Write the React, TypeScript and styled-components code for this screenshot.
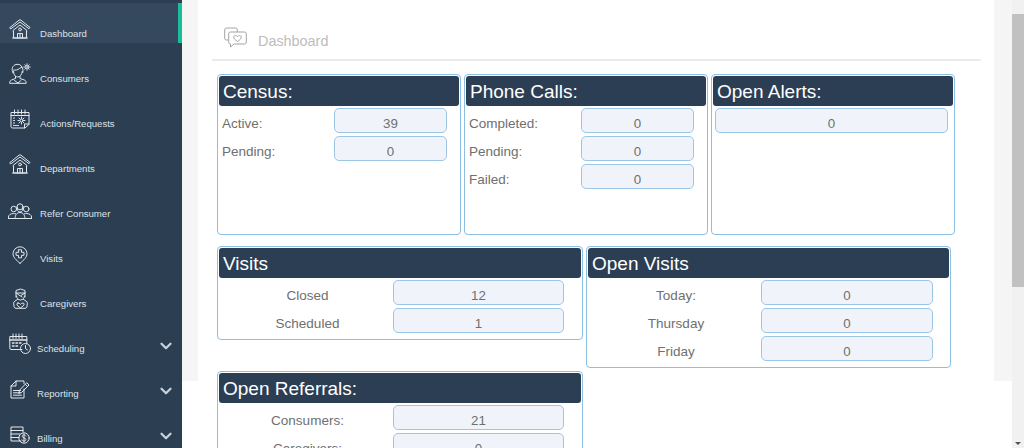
import React from "react";
import styled, { createGlobalStyle } from "styled-components";
import { ChevronDown } from "lucide-react";

const GlobalStyle = createGlobalStyle`
    html, body {
        margin: 0;
        padding: 0;
        height: 100%;
        overflow: hidden;
        font-family: "Liberation Sans", Arial, sans-serif;
    }
`;

// ---- sidebar icons ----
const Svg = styled.svg`
    display: block;
    flex-shrink: 0;
    fill: none;
    stroke: #e3e8ed;
    stroke-width: 1;
    stroke-linejoin: round;
    stroke-linecap: round;
`;

const HomeIcon = () => (
    <Svg width="22" height="20" viewBox="0 0 22 20">
        <path d="M1 8.500 10 1.200a1.600 1.600 0 0 1 2 0L21 8.500l-1 1.200L11 3 2 9.700z" />
        <path d="M4 11.500 11 6l7 5.500" />
        <path d="M4.500 12v7h13v-7M3.500 19h15" />
        <path d="M8.500 19v-4.500h5V19M11 14.500V19" />
        <circle cx="11" cy="10.500" r="1.400" />
    </Svg>
);

const ConsumerIcon = () => (
    <Svg width="22" height="21" viewBox="0 0 22 21">
        <path d="M4 10C2 6 3.500 2.500 7 1.500c2.500-.7 5 .3 6 2.500l-2.500 1.500C8.500 7 6.500 7.500 5 7" />
        <path d="M4.500 8c0 3.500 1.800 6 4.200 6s4-2.200 4.500-5.500" />
        <path d="M13 4c1 1.500 1.200 3.200.8 5.500" />
        <path d="M6.500 13.500v2l-4 1.500C1.300 17.500.7 18.500.7 20.300h16.500c0-1.800-.6-2.800-1.800-3.300l-4.400-1.500v-2" />
        <path d="M5.500 17.500 9 20M12 17.500 9 20" />
        <circle cx="18" cy="4" r="1.300" />
        <path d="M18 .8v1.200M18 6v1.200M14.800 4H16M20 4h1.200M15.800 1.800l.8.800M19.400 5.400l.8.800M20.200 1.800l-.8.800M16.600 5.400l-.8.800" />
    </Svg>
);

const CalendarGearIcon = () => (
    <Svg width="20" height="20" viewBox="0 0 20 20">
        <path d="M14.500 19H2.500A1.500 1.500 0 0 1 1 17.500V3.500h18v11.500z" />
        <path d="M1 6.500h18M14.500 19v-4H19" />
        <path d="M4.500 1v4M8 1v4M11.500 1v4M15 1v4" />
        <circle cx="11.500" cy="11.500" r="1.500" />
        <path d="M11.500 8v1.500M11.500 13.500V15M8 11.500h1.500M13.500 11.500H15M9 9l1 1M13 13l1 1M14 9l-1 1M10 13l-1 1" />
        <path d="M3.500 9h2M3.500 11.500h2M3.500 14h2M3.500 16.500h5" strokeDasharray="1 1" />
    </Svg>
);

const GroupIcon = () => (
    <Svg width="24" height="16" viewBox="0 0 24 16">
        <circle cx="12" cy="3.800" r="3" />
        <path d="M9 4c-.5 3 1 5 3 5s3.500-2 3-5" />
        <path d="M7 15.500c0-3.500 2-6 5-6s5 2.500 5 6z" />
        <circle cx="5.800" cy="6" r="2.800" />
        <path d="M.5 15.500v-1.500c0-2 2-3.500 5.300-3.500.6 0 1.200.1 1.700.2" />
        <circle cx="18.200" cy="6" r="2.800" />
        <path d="M23.500 15.500v-1.500c0-2-2-3.500-5.300-3.500-.6 0-1.200.1-1.700.2" />
        <path d="M.5 15.500h23" />
    </Svg>
);

const PinIcon = () => (
    <Svg width="16" height="18" viewBox="0 0 16 18">
        <path d="M8 17.300C4 14 1 11 1 7.800a7 7 0 0 1 14 0C15 11 12 14 8 17.300z" />
        <path d="M6.500 3.800h3v2.500H12v3H9.500v2.500h-3V9.300H4v-3h2.500z" />
    </Svg>
);

const CaregiverIcon = () => (
    <Svg width="15" height="21" viewBox="0 0 15 21">
        <path d="M3 9V2.500L7.500 1 12 2.500V9" />
        <path d="M3 5h9M3 5l6 4M12 5 8 7.500" />
        <path d="M3.500 8c0 2 1.800 4 4 4s4-2 4-4" />
        <path d="M4.500 11.500 2 13C.5 14 .3 15.500 1 17c-.5 1.800.5 3.300 2 3.300h9c1.500 0 2.500-1.500 2-3.300.7-1.500.5-3-1-4l-2.500-1.500" />
        <path d="M5 15c1 0 1.800.5 2.500 1.300.7-.8 1.500-1.300 2.500-1.300 1.500 0 1.500 2 0 3l-2.500 2-2.500-2c-1.500-1-1.500-3 0-3z" />
    </Svg>
);

const CalendarClockIcon = () => (
    <Svg width="22" height="21" viewBox="0 0 22 21">
        <path d="M13 16.500H2A1.500 1.500 0 0 1 .8 15V3.500h17V11" />
        <path d="M.8 7h17" strokeWidth="1.600" />
        <path d="M4 1v4.500M7 1v4.500M10 1v4.500M13 1v4.500" />
        <path d="M3.500 10h1.500M7 10h1.500M10.500 10h1.500M3.500 13h1.500M7 13h1.500" strokeWidth="1.500" />
        <circle cx="16.500" cy="15.500" r="5" />
        <path d="M16.500 12.500v3.200l2 1.200" />
    </Svg>
);

const ReportIcon = () => (
    <Svg width="20" height="19" viewBox="0 0 20 19">
        <path d="M14 9v9H1V6l5-5h8v2.500" />
        <path d="M6 1v5H1" />
        <path d="M3.500 10.500h7M3.500 12.800h7M3.500 15.200h8" />
        <path d="M9.500 10.500l-.8 2.800 2.800-.8L19 5l-2-2z" />
        <path d="M15.500 4.500l2 2" />
    </Svg>
);

const BillingIcon = () => (
    <Svg width="20" height="18" viewBox="0 0 20 18">
        <path d="M11 15H1V1h12v5" />
        <path d="M1 4.500h12M1 8h9M1 11.500h8" />
        <circle cx="14" cy="12" r="5.200" />
        <path d="M15.800 10c-.4-.8-1-1.200-1.800-1.200-1 0-1.800.6-1.800 1.500 0 2 3.700 1.200 3.700 3.300 0 .9-.8 1.500-1.900 1.500-.9 0-1.600-.5-2-1.300M14 7.800v8.400" />
    </Svg>
);

const ChatHeartIcon = () => (
    <svg width="23" height="21" viewBox="0 0 23 21" fill="none" stroke="#a3a3a3" strokeWidth="1" strokeLinejoin="round">
        <path d="M4 13H2.500A1.800 1.800 0 0 1 .7 11.200V2.800A1.800 1.800 0 0 1 2.500 1h9A1.800 1.800 0 0 1 13.300 2.800V5" />
        <path d="M6.500 5h14a1.800 1.800 0 0 1 1.800 1.800v8.400a1.800 1.800 0 0 1-1.800 1.800H10l-3.500 3v-3a1.800 1.800 0 0 1-1.800-1.800V6.800A1.800 1.800 0 0 1 6.500 5z" />
        <path d="M13.500 14.500c-2.500-1.700-3.800-3-3.800-4.300 0-1 .8-1.700 1.800-1.700.8 0 1.500.4 2 1.200.5-.8 1.200-1.200 2-1.200 1 0 1.800.7 1.800 1.700 0 1.300-1.300 2.600-3.800 4.300z" />
    </svg>
);

// ---- data ----
const menu = [
    { label: "Dashboard", icon: <HomeIcon />, active: true },
    { label: "Consumers", icon: <ConsumerIcon /> },
    { label: "Actions/Requests", icon: <CalendarGearIcon /> },
    { label: "Departments", icon: <HomeIcon /> },
    { label: "Refer Consumer", icon: <GroupIcon /> },
    { label: "Visits", icon: <PinIcon /> },
    { label: "Caregivers", icon: <CaregiverIcon /> },
    { label: "Scheduling", icon: <CalendarClockIcon />, sub: true },
    { label: "Reporting", icon: <ReportIcon />, sub: true },
    { label: "Billing", icon: <BillingIcon />, sub: true },
];

interface IStat {
    label?: string;
    value: number;
}

interface ICard {
    title: string;
    width: number;
    height?: number;
    centered?: boolean;
    labelWidth: number;
    valueWidth: number;
    stats: IStat[];
}

const topCards: ICard[] = [
    { title: "Census:", width: 244, height: 161, labelWidth: 112, valueWidth: 113, stats: [{ label: "Active:", value: 39 }, { label: "Pending:", value: 0 }] },
    { title: "Phone Calls:", width: 244, height: 161, labelWidth: 112, valueWidth: 113, stats: [{ label: "Completed:", value: 0 }, { label: "Pending:", value: 0 }, { label: "Failed:", value: 0 }] },
    { title: "Open Alerts:", width: 244, height: 161, labelWidth: 0, valueWidth: 233, stats: [{ value: 0 }] },
];

const middleCards: ICard[] = [
    { title: "Visits", width: 366, centered: true, labelWidth: 171, valueWidth: 171, stats: [{ label: "Closed", value: 12 }, { label: "Scheduled", value: 1 }] },
    { title: "Open Visits", width: 365, centered: true, labelWidth: 170, valueWidth: 172, stats: [{ label: "Today:", value: 0 }, { label: "Thursday", value: 0 }, { label: "Friday", value: 0 }] },
];

const bottomCards: ICard[] = [
    { title: "Open Referrals:", width: 366, centered: true, labelWidth: 171, valueWidth: 171, stats: [{ label: "Consumers:", value: 21 }, { label: "Caregivers:", value: 0 }] },
];

const StatCard = ({ title, width, height, centered, labelWidth, valueWidth, stats }: ICard) => (
    <Card $width={width} $height={height}>
        <CardTitle>{title}</CardTitle>
        <StatList $inset={labelWidth === 0 ? 2 : 3}>
            {stats.map((stat, index) => (
                <StatRow key={index} $label={labelWidth} $value={valueWidth}>
                    <StatLabel $centered={centered}>{stat.label}</StatLabel>
                    <StatValue>{stat.value}</StatValue>
                </StatRow>
            ))}
        </StatList>
    </Card>
);

const App = () => {
    return (
        <Page>
            <GlobalStyle />
            <Sidebar>
                {menu.map((item) => (
                    <MenuItem key={item.label} $active={item.active}>
                        <MenuIcon $sub={item.sub}>{item.icon}</MenuIcon>
                        <MenuLabel>{item.label}</MenuLabel>
                        {item.sub && (
                            <MenuArrow>
                                <ChevronDown size={18} strokeWidth={3} />
                            </MenuArrow>
                        )}
                    </MenuItem>
                ))}
            </Sidebar>
            <Main>
                <Panel>
                    <PanelHeader>
                        <PanelIcon><ChatHeartIcon /></PanelIcon>
                        <PanelTitle>Dashboard</PanelTitle>
                    </PanelHeader>
                    <Board>
                        <CardRow>
                            {topCards.map((card) => <StatCard key={card.title} {...card} />)}
                        </CardRow>
                        <CardRow>
                            {middleCards.map((card) => <StatCard key={card.title} {...card} />)}
                        </CardRow>
                        <CardRow>
                            {bottomCards.map((card) => <StatCard key={card.title} {...card} />)}
                        </CardRow>
                    </Board>
                </Panel>
            </Main>
            <ScrollTrack>
                <ScrollThumb />
                <ScrollArrow />
            </ScrollTrack>
        </Page>
    );
};

export default App;

const Page = styled.div`
    display: flex;
    width: 1024px;
    height: 448px;
    overflow: hidden;
    background: #fff;
`;

const Sidebar = styled.nav`
    flex: 0 0 182px;
    padding-top: 3px;
    box-sizing: border-box;
    background: #2c3e52;
    display: flex;
    flex-direction: column;
    gap: 5px;
    overflow: hidden;
`;

const MenuItem = styled.div<{ $active?: boolean }>`
    flex: 0 0 40px;
    display: flex;
    align-items: flex-end;
    box-sizing: border-box;
    padding: 0 7px 3px 9px;
    background: ${(p) => (p.$active ? "#35495e" : "transparent")};
    box-shadow: ${(p) => (p.$active ? "inset -4px 0 0 #1abc9c" : "none")};
`;

const MenuIcon = styled.span<{ $sub?: boolean }>`
    flex: 0 0 ${(p) => (p.$sub ? 28 : 31)}px;
    min-width: 0;
    box-sizing: border-box;
    display: flex;
    justify-content: center;
    padding-right: ${(p) => (p.$sub ? 6 : 9)}px;
    margin-bottom: 1px;
`;

const MenuLabel = styled.span`
    font-size: 9.6px;
    line-height: 12px;
    color: #dde3e9;
`;

const MenuArrow = styled.span`
    display: flex;
    margin-left: auto;
    color: #c8d2dc;
`;

const Main = styled.main`
    flex: 1;
    min-width: 0;
    padding: 0 18px 0 16px;
    background: linear-gradient(#f5f5f5 381px, #fff 381px);
`;

const Panel = styled.section`
    height: 100%;
    box-sizing: border-box;
    padding: 0 13px 0 14px;
    background: #fff;
    overflow: hidden;
`;

const PanelHeader = styled.header`
    height: 61px;
    box-sizing: border-box;
    display: flex;
    align-items: flex-end;
    gap: 11px;
    padding: 0 0 9px 12px;
    border-bottom: 2px solid #e9ecef;
`;

const PanelIcon = styled.span`
    display: flex;
    margin-bottom: 2px;
`;

const PanelTitle = styled.span`
    font-size: 14.4px;
    line-height: 17px;
    color: #bdbdbd;
`;

const Board = styled.div`
    display: flex;
    flex-direction: column;
    gap: 3px;
    margin: 13px 0 0 5px;

    > :first-child {
        margin-bottom: 8px;
    }
`;

const CardRow = styled.div`
    display: flex;
    align-items: flex-start;
    gap: 3px;
`;

const Card = styled.article<{ $width: number; $height?: number }>`
    width: ${(p) => p.$width}px;
    height: ${(p) => (p.$height ? `${p.$height}px` : "auto")};
    box-sizing: border-box;
    flex-shrink: 0;
    padding: 1px 1px 6px;
    border: 1px solid #8dbfe2;
    border-radius: 4px;
    background: #fff;
`;

const CardTitle = styled.h2`
    margin: 0;
    height: 30px;
    box-sizing: border-box;
    padding: 1px 0 0 4px;
    border-radius: 3px;
    background: #2b3e53;
    color: #fff;
    font-size: 19px;
    font-weight: 400;
    line-height: 29px;
`;

const StatList = styled.div<{ $inset: number }>`
    display: flex;
    flex-direction: column;
    gap: 3px;
    padding: 2px 0 0 ${(p) => p.$inset}px;
`;

const StatRow = styled.div<{ $label: number; $value: number }>`
    display: grid;
    grid-template-columns: ${(p) => p.$label}px ${(p) => p.$value}px;
`;

const StatLabel = styled.div<{ $centered?: boolean }>`
    padding-top: 7px;
    font-size: 13.5px;
    line-height: 18px;
    color: #6f6f6f;
    text-align: ${(p) => (p.$centered ? "center" : "left")};
    overflow: hidden;
`;

const StatValue = styled.div`
    height: 25px;
    box-sizing: border-box;
    padding-top: 6px;
    border: 1px solid #9cc6e6;
    border-radius: 5px;
    background: #f0f4fa;
    color: #6f6f6f;
    font-size: 13.33px;
    line-height: 18px;
    text-align: center;
`;

const ScrollTrack = styled.div`
    flex: 0 0 12px;
    position: relative;
    padding-top: 14px;
    box-sizing: border-box;
    background: #f1f1f1;
`;

const ScrollThumb = styled.div`
    height: 273px;
    background: #c1c1c1;
`;

const ScrollArrow = styled.span`
    position: absolute;
    left: 3px;
    bottom: 3px;
    border-left: 3px solid transparent;
    border-right: 3px solid transparent;
    border-top: 3px solid #505050;
`;
